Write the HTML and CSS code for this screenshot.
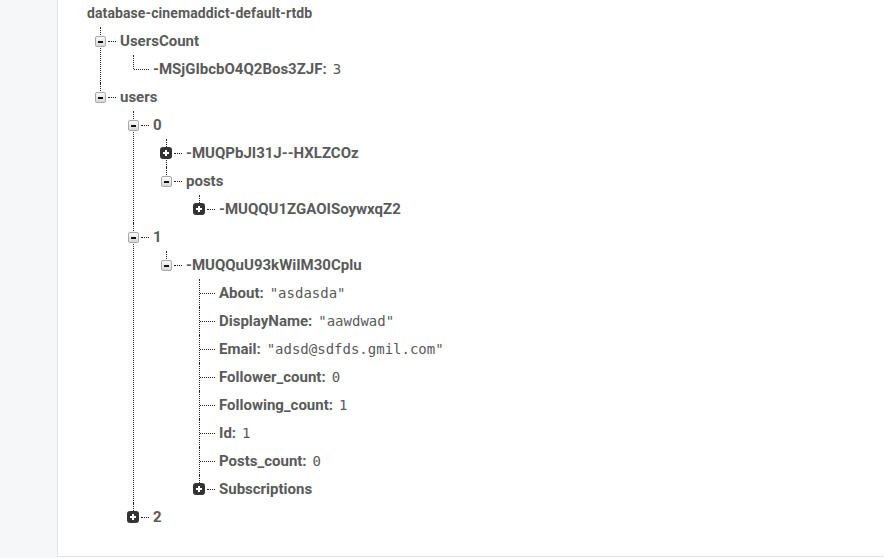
FILE: index.html
```html
<!DOCTYPE html>
<html>
<head>
    <meta charset="utf-8">
    <title>database-cinemaddict-default-rtdb</title>
    <link rel="stylesheet" href="styles.css">
</head>
<body>
    <div class="page">
        <div class="side"></div>
        <div class="viewer">
            <div class="tree">
                <div class="root-title">database-cinemaddict-default-rtdb</div>
                <ul class="children root-children">
                    <li class="node">
                        <div class="row"><span class="toggle minus"></span><span class="dash"></span><span class="key">UsersCount</span></div>
                        <ul class="children">
                            <li class="node">
                                <div class="row"><span class="dash leaf"></span><span class="key">-MSjGIbcbO4Q2Bos3ZJF:</span><span class="value">3</span></div>
                            </li>
                        </ul>
                    </li>
                    <li class="node">
                        <div class="row"><span class="toggle minus"></span><span class="dash"></span><span class="key">users</span></div>
                        <ul class="children">
                            <li class="node">
                                <div class="row"><span class="toggle minus"></span><span class="dash"></span><span class="key">0</span></div>
                                <ul class="children">
                                    <li class="node">
                                        <div class="row"><span class="toggle plus"></span><span class="dash"></span><span class="key">-MUQPbJI31J--HXLZCOz</span></div>
                                    </li>
                                    <li class="node">
                                        <div class="row"><span class="toggle minus"></span><span class="dash"></span><span class="key">posts</span></div>
                                        <ul class="children">
                                            <li class="node">
                                                <div class="row"><span class="toggle plus"></span><span class="dash"></span><span class="key">-MUQQU1ZGAOISoywxqZ2</span></div>
                                            </li>
                                        </ul>
                                    </li>
                                </ul>
                            </li>
                            <li class="node">
                                <div class="row"><span class="toggle minus"></span><span class="dash"></span><span class="key">1</span></div>
                                <ul class="children">
                                    <li class="node">
                                        <div class="row"><span class="toggle minus"></span><span class="dash"></span><span class="key">-MUQQuU93kWiIM30Cplu</span></div>
                                        <ul class="children">
                                            <li class="node">
                                                <div class="row"><span class="dash leaf"></span><span class="key">About:</span><span class="value">"asdasda"</span></div>
                                            </li>
                                            <li class="node">
                                                <div class="row"><span class="dash leaf"></span><span class="key">DisplayName:</span><span class="value">"aawdwad"</span></div>
                                            </li>
                                            <li class="node">
                                                <div class="row"><span class="dash leaf"></span><span class="key">Email:</span><span class="value">"adsd@sdfds.gmil.com"</span></div>
                                            </li>
                                            <li class="node">
                                                <div class="row"><span class="dash leaf"></span><span class="key">Follower_count:</span><span class="value">0</span></div>
                                            </li>
                                            <li class="node">
                                                <div class="row"><span class="dash leaf"></span><span class="key">Following_count:</span><span class="value">1</span></div>
                                            </li>
                                            <li class="node">
                                                <div class="row"><span class="dash leaf"></span><span class="key">Id:</span><span class="value">1</span></div>
                                            </li>
                                            <li class="node">
                                                <div class="row"><span class="dash leaf"></span><span class="key">Posts_count:</span><span class="value">0</span></div>
                                            </li>
                                            <li class="node">
                                                <div class="row"><span class="toggle plus"></span><span class="dash"></span><span class="key">Subscriptions</span></div>
                                            </li>
                                        </ul>
                                    </li>
                                </ul>
                            </li>
                            <li class="node">
                                <div class="row"><span class="toggle plus"></span><span class="dash"></span><span class="key">2</span></div>
                            </li>
                        </ul>
                    </li>
                </ul>
            </div>
        </div>
    </div>
</body>
</html>
```

FILE: styles.css
```css
body {
    margin: 0;
    background-color: #ffffff;
    font-family: Roboto, "Liberation Sans", Arial, sans-serif;
}
.page {
    display: flex;
    height: 558px;
}
.side {
    width: 57px;
    flex-shrink: 0;
    background-color: #f6f7f8;
    border-right: 1px solid #e3e4e6;
}
.viewer {
    flex: 1;
    height: 556px;
    border-bottom: 1px solid #e0e0e0;
    padding-left: 29px;
    overflow: hidden;
}
.root-title {
    height: 27px;
    line-height: 27px;
    font-size: 14px;
    font-weight: bold;
    letter-spacing: 0.1px;
    color: #5a5a5a;
}
.children {
    list-style: none;
    margin: 0;
    padding: 0 0 0 33px;
}
.root-children {
    padding-left: 13px;
}
.node {
    position: relative;
}
/* dotted line that joins the siblings */
.node::before {
    content: "";
    position: absolute;
    left: 0;
    top: 0;
    bottom: 0;
    border-left: 1px dotted #222;
}
.node:last-child::before {
    bottom: auto;
    height: 14px;
}
.row {
    position: relative;
    display: flex;
    align-items: center;
    height: 28px;
    white-space: nowrap;
}
.toggle {
    position: relative;
    width: 11px;
    height: 11px;
    margin-left: -5px;
    margin-right: 2px;
    box-sizing: border-box;
    border-radius: 2px;
    flex-shrink: 0;
}
.minus {
    background: linear-gradient(#fafafa, #d9d9d9);
    border: 1px solid #a8a8a8;
}
.minus::after {
    content: "";
    position: absolute;
    left: 2px;
    top: 4px;
    width: 5px;
    height: 2px;
    background-color: #111;
}
.plus {
    width: 12px;
    height: 12px;
    margin-left: -6px;
    margin-right: 2px;
    background-color: #333;
    border-radius: 3px;
}
.plus::before,
.plus::after {
    content: "";
    position: absolute;
    background-color: #fff;
}
.plus::before {
    left: 3px;
    top: 5px;
    width: 6px;
    height: 2px;
}
.plus::after {
    left: 5px;
    top: 3px;
    width: 2px;
    height: 6px;
}
.dash {
    width: 8px;
    border-top: 1px dotted #222;
    margin-right: 4px;
}
.dash.leaf {
    width: 15px;
    margin-left: 1px;
}
.key {
    font-size: 15px;
    font-weight: bold;
    color: #5a5a5a;
}
.value {
    margin-left: 6px;
    font-family: "DejaVu Sans Mono", "Liberation Mono", monospace;
    font-size: 14px;
    color: #5a5a5a;
}
```
